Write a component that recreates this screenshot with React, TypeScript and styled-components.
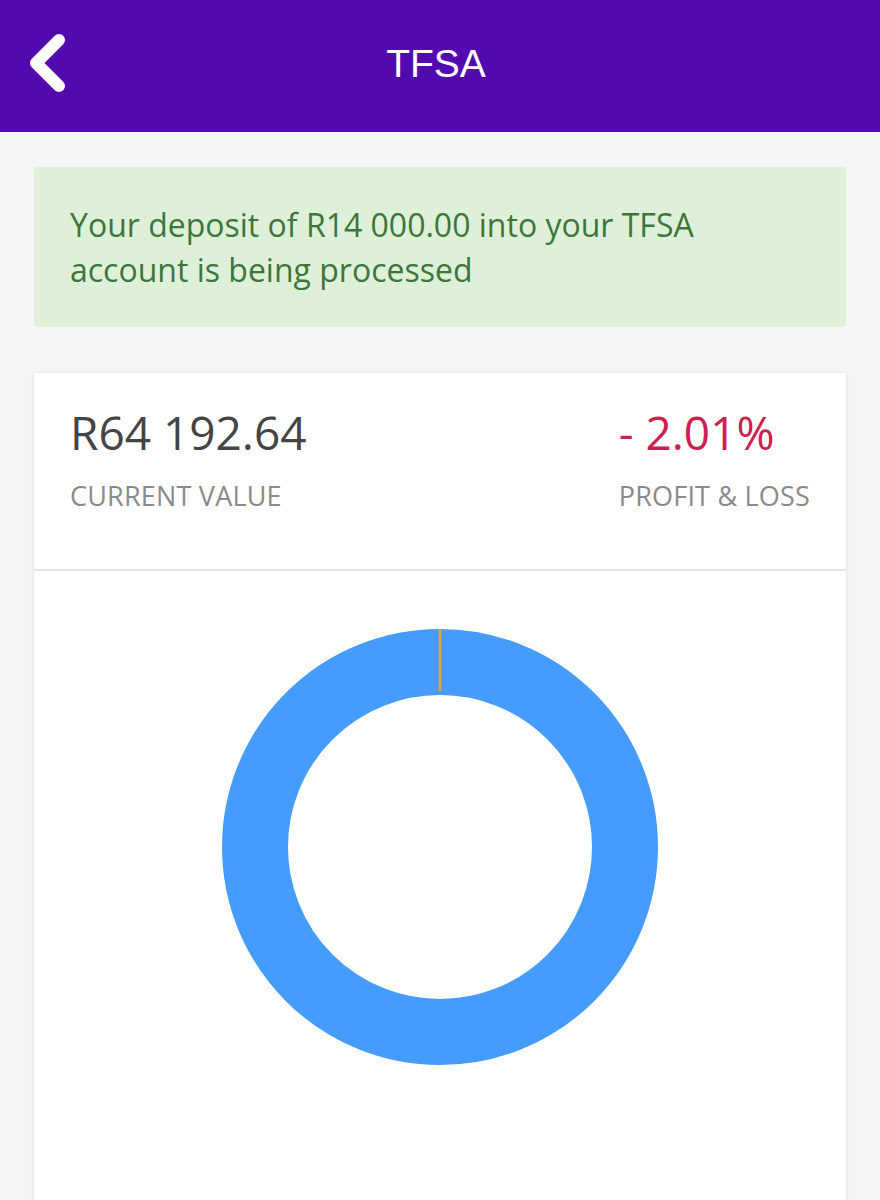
import React from "react";
import styled, { createGlobalStyle } from "styled-components";

const GlobalStyle = createGlobalStyle`
  html, body {
    margin: 0;
    padding: 0;
    background: #f4f5f7;
  }
  body {
    font-family: "Open Sans", "Liberation Sans", sans-serif;
  }
`;

const Page = styled.div`
  width: 880px;
  min-height: 1200px;
  background: #f4f5f7;
  display: flex;
  flex-direction: column;
`;

const Header = styled.header`
  height: 132px;
  background: #520ab0;
  display: grid;
  grid-template-columns: 100px 1fr 100px;
  align-items: center;
`;

const BackButton = styled.button`
  border: 0;
  background: transparent;
  padding: 0 0 0 24px;
  height: 100%;
  display: flex;
  align-items: center;
  cursor: pointer;
  margin-top: -5px;
`;

const Title = styled.h1`
  margin: -4px 8px 0 0;
  text-align: center;
  color: #ffffff;
  font-family: "Liberation Sans", Arial, sans-serif;
  font-weight: 400;
  font-size: 39px;
`;

const Content = styled.main`
  padding: 35px 34px 0;
  display: flex;
  flex-direction: column;
  gap: 46px;
  flex: 1;
`;

const Alert = styled.div`
  background: #dff0d8;
  color: #3c763d;
  border-radius: 4px;
  padding: 35px 36px 0;
  font-size: 32px;
  line-height: 45px;
  height: 160px;
  box-sizing: border-box;
`;

const Card = styled.section`
  background: #ffffff;
  box-shadow: 0 1px 4px rgba(0, 0, 0, 0.12);
  flex: 1;
  display: flex;
  flex-direction: column;
`;

const Summary = styled.div`
  display: flex;
  justify-content: space-between;
  padding: 31px 36px 0 36px;
  height: 198px;
  box-sizing: border-box;
  border-bottom: 2px solid #e2e2e2;
`;

const Stat = styled.div`
  display: flex;
  flex-direction: column;
  gap: 20px;
`;

const StatValue = styled.div<{ $tone?: "neutral" | "loss" }>`
  font-size: 46px;
  line-height: 56px;
  color: ${(p) => (p.$tone === "loss" ? "#cc2150" : "#444444")};
`;

const StatLabel = styled.div`
  font-size: 27px;
  line-height: 32px;
  color: #8a8a8a;
  text-transform: uppercase;
  letter-spacing: 0.2px;
`;

const ChartArea = styled.div`
  display: flex;
  justify-content: center;
  padding-top: 58px;
  flex: 1;
`;

const Donut = () => {
  const size = 436;
  const c = size / 2;
  const r = 185;
  return (
    <svg width={size} height={size} viewBox={`0 0 ${size} ${size}`}>
      <circle cx={c} cy={c} r={r} fill="none" stroke="#459cfd" strokeWidth={66} />
      <rect x={c - 1.5} y={c - r - 33} width={3} height={62} fill="#d9a54f" />
    </svg>
  );
};

export default function App() {
  return (
    <>
      <GlobalStyle />
      <Page>
        <Header>
          <BackButton aria-label="Back">
            <svg width="52" height="66" viewBox="0 0 52 66">
              <polyline
                points="35,9 12,32 35,55"
                fill="none"
                stroke="#ffffff"
                strokeWidth={12}
                strokeLinecap="round"
                strokeLinejoin="round"
              />
            </svg>
          </BackButton>
          <Title>TFSA</Title>
          <div />
        </Header>
        <Content>
          <Alert>
            Your deposit of R14 000.00 into your TFSA
            <br />
            account is being processed
          </Alert>
          <Card>
            <Summary>
              <Stat>
                <StatValue>R64 192.64</StatValue>
                <StatLabel>Current Value</StatLabel>
              </Stat>
              <Stat>
                <StatValue $tone="loss">- 2.01%</StatValue>
                <StatLabel>Profit &amp; Loss</StatLabel>
              </Stat>
            </Summary>
            <ChartArea>
              <Donut />
            </ChartArea>
          </Card>
        </Content>
      </Page>
    </>
  );
}
